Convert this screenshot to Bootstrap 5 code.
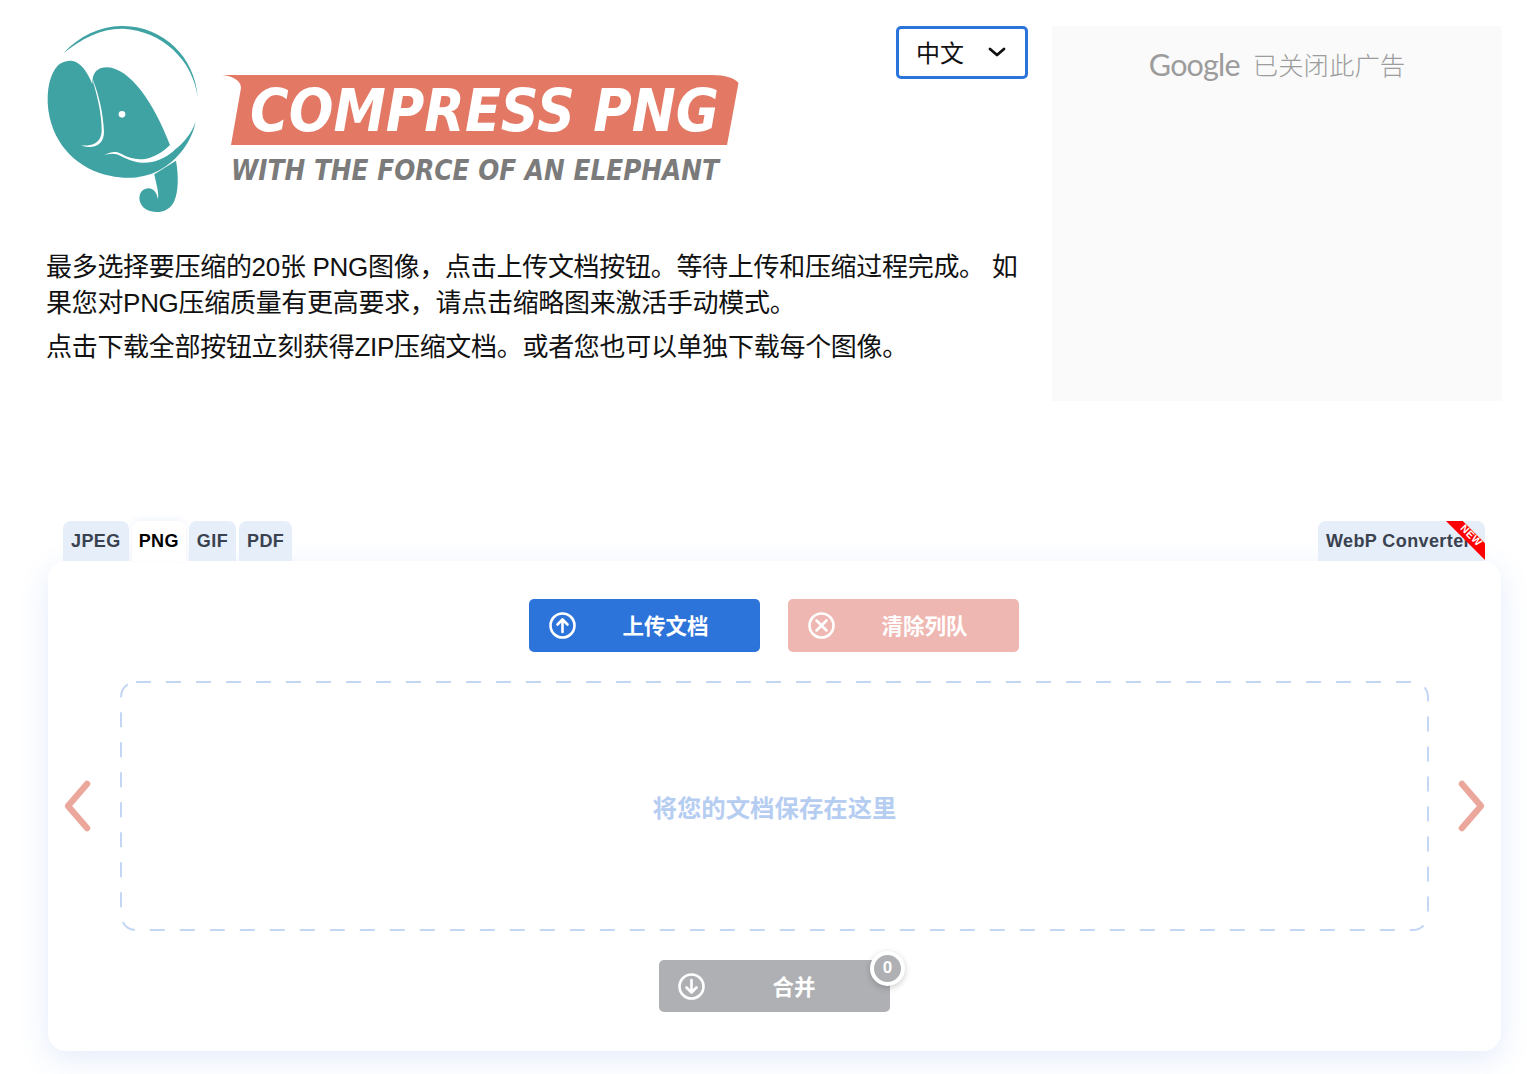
<!DOCTYPE html>
<html lang="zh">
<head>
    <meta charset="UTF-8">
    <meta name="viewport" content="width=device-width, initial-scale=1.0">
    <title>Compress PNG</title>
    <link href="https://cdn.jsdelivr.net/npm/bootstrap@5.3.0/dist/css/bootstrap.min.css" rel="stylesheet">
    <style>
        body {
            font-family: "Liberation Sans", "Noto Sans CJK SC", sans-serif;
            color: #111;
            background: #fff;
        }
        .page-wrap { padding: 26px 25px 23px 46px; }
        .top-left { width: 982px; }
        .logo-svg { display: block; width: 800px; height: 190px; margin-left: -6px; }
        .logo-title { font-family: "DejaVu Sans", sans-serif; font-weight: 700; font-style: italic; }
        .lang-select {
            width: 132px; height: 53px; border: 3px solid #2b74db; border-radius: 5px;
            font-size: 24px; color: #111; padding: 2px 0 0 17px; box-shadow: none;
            background-position: right 18px center; background-size: 20px 14px;
            background-image: url("data:image/svg+xml,%3csvg xmlns='http://www.w3.org/2000/svg' viewBox='0 0 20 14'%3e%3cpath fill='none' stroke='%23111' stroke-width='2.8' stroke-linecap='round' stroke-linejoin='round' d='M3 3l7 6 7-6'/%3e%3c/svg%3e");
        }
        .intro { font-size: 26px; line-height: 36px; letter-spacing: -.3px; margin-top: 33px; }
        .intro p { margin-bottom: 8px; }
        .ad-box { width: 450px; height: 375px; background: #fafafa; margin-left: 24px; padding-top: 18px; color: #9c9c9c; }
        .ad-google { font-family: Lato, "Open Sans", sans-serif; font-size: 30.5px; letter-spacing: -.8px; margin-right: 13px; line-height: 40px; }
        .ad-note { font-family: "Noto Sans CJK SC", sans-serif; font-size: 25.4px; font-weight: 300; line-height: 40px; }
        .tool-wrap { margin-top: 120px; padding-left: 2px; width: 1455px; }
        .tab-row { padding: 0 16px 0 15px; height: 40px; position: relative; z-index: 2; }
        .tab-gap { gap: 3px; }
        .tab-item {
            display: block; height: 40px; line-height: 41px; padding: 0 8px; background: #e6eefa;
            border-radius: 8px 8px 0 0; font-size: 18px; font-weight: 700; letter-spacing: .4px; color: #3a4250;
            text-decoration: none;
        }
        .tab-item.is-on { background: #fff; color: #000; padding: 0 7px; box-shadow: 0 -2px 6px rgba(70, 110, 200, .08); }
        .tab-new { position: relative; width: 167px; white-space: nowrap; }
        .new-flag {
            position: absolute; top: 0; right: 0; width: 39px; height: 39px; background: #f00;
            clip-path: polygon(0 0, 43% 0, 100% 57%, 100% 100%);
        }
        .new-text {
            position: absolute; top: 8px; right: 0; width: 27px; text-align: center; font-size: 10.5px; line-height: 12px;
            color: #fff; letter-spacing: .3px; transform: rotate(45deg);
        }
        .tool-panel {
            height: 490px; background: #fff; border: 0; border-radius: 18px; padding-top: 38px;
            box-shadow: 0 8px 30px rgba(60, 110, 220, .14); position: relative; z-index: 1;
        }
        .btn-gap { gap: 28px; padding-right: 1px; }
        .act-btn {
            width: 231px; height: 53px; border: 0; border-radius: 5px; color: #fff; padding: 0 5px 0 20px;
            font-size: 21.5px; font-weight: 700; font-family: "Noto Sans CJK SC", sans-serif;
        }
        .act-btn svg { width: 27px; height: 27px; flex: none; }
        .act-btn span { flex-grow: 1; text-align: center; }
        .act-blue { background: #2d74da; }
        .act-red { background: #efb7b1; }
        .act-gray { background: #aeb0b4; height: 52px; position: relative; padding-right: 7px; padding-left: 19px; }
        .count-dot {
            position: absolute; top: -9px; right: -15px; width: 35px; height: 35px; border-radius: 50%;
            background: #aeb0b4; border: 4px solid #fff; box-shadow: 0 2px 6px rgba(0, 0, 0, .2);
            font: 700 17px/25px "Liberation Sans", sans-serif; text-align: center;
        }
        .drop-row { margin-top: 29px; }
        .side-arrow { width: 72px; flex: none; }
        .side-left { padding-left: 15px; }
        .side-right { padding-right: 15px; }
        .side-arrow svg { display: block; width: 30px; height: 56px; }
        .drop-zone {
            width: 1309px; height: 250px; padding-top: 2px; color: #b6cdf2; font-size: 24.4px; font-weight: 700;
            font-family: "Noto Sans CJK SC", sans-serif;
            background-image: url("data:image/svg+xml,%3csvg xmlns='http://www.w3.org/2000/svg' width='1309' height='250'%3e%3crect x='1' y='1' width='1307' height='248' rx='15' fill='none' stroke='%23c3d7f5' stroke-width='2' stroke-dasharray='15 15'/%3e%3c/svg%3e");
        }
        .merge-row { margin-top: 29px; }
    </style>
</head>
<body>
    <div class="page-wrap">
        <div class="d-flex">
            <div class="top-left">
                <div class="d-flex justify-content-between align-items-start">
                    <svg class="logo-svg" viewBox="40 26 800 190" aria-label="Compress PNG">
                        <g transform="translate(30 10) scale(.3333)">
                            <g fill="#3fa2a3">
                                <!-- ring -->
                                <path d="M100 130C150 75 215 47 280 48C400 50 495 140 503 262C490 150 395 62 280 56C215 54 155 85 100 130Z"/>
                                <!-- head, ear and lower crescent in one shape -->
                                <path d="M122 152C150 152 172 185 187 222C186 190 200 172 232 172C300 176 370 275 420 405L430 423C460 400 485 370 497 335C485 395 445 450 385 482C340 505 290 508 240 497C150 480 70 410 55 300C48 240 60 190 85 165C97 155 110 152 122 152Z"/>
                                <!-- trunk -->
                                <path d="M373 493L438 452C446 495 446 545 432 575C418 605 378 615 348 598C326 585 322 555 338 541C356 528 378 533 384 568C388 550 378 520 373 493Z"/>
                            </g>
                            <g fill="#fff">
                                <!-- line between ear and head -->
                                <path d="M184 198C205 245 220 310 222 365C222 395 205 412 175 411C168 411 160 409 153 406C175 409 212 405 215 365C216 310 200 250 184 198Z"/>
                                <!-- mouth line -->
                                <path d="M222 436C240 425 258 422 275 432C300 447 330 452 360 443C385 435 405 420 420 405L432 422C405 445 370 460 335 458C300 456 280 440 260 433C245 429 232 433 222 436Z"/>
                                <circle cx="276" cy="313" r="10"/>
                            </g>
                        </g>
                        <path fill="#e37965" d="M222 75H712C725 75 735 78 738.5 83L727 145H231L241 88C241 80 232 76 222 75Z"/>
                        <text class="logo-title" x="250" y="131" font-size="58" fill="#fff" textLength="469" lengthAdjust="spacingAndGlyphs">COMPRESS PNG</text>
                        <text class="logo-title" x="231" y="180" font-size="28" fill="#7b7b7b" textLength="488" lengthAdjust="spacingAndGlyphs">WITH THE FORCE OF AN ELEPHANT</text>
                    </svg>
                    <select class="form-select lang-select" aria-label="语言">
                        <option>中文</option>
                        <option>English</option>
                    </select>
                </div>
                <div class="intro">
                    <p>最多选择要压缩的20张 PNG图像，点击上传文档按钮。等待上传和压缩过程完成。 如果您对PNG压缩质量有更高要求，请点击缩略图来激活手动模式。</p>
                    <p>点击下载全部按钮立刻获得ZIP压缩文档。或者您也可以单独下载每个图像。</p>
                </div>
            </div>
            <div class="ad-box d-flex justify-content-center align-items-start">
                <span class="ad-google">Google</span>
                <span class="ad-note">已关闭此广告</span>
            </div>
        </div>

        <div class="tool-wrap">
            <div class="tab-row d-flex justify-content-between">
                <div class="d-flex tab-gap">
                    <a class="tab-item" href="#">JPEG</a>
                    <a class="tab-item is-on" href="#">PNG</a>
                    <a class="tab-item" href="#">GIF</a>
                    <a class="tab-item" href="#">PDF</a>
                </div>
                <a class="tab-item tab-new" href="#">WebP Converter
                    <span class="new-flag"></span>
                    <span class="new-text">NEW</span>
                </a>
            </div>
            <div class="card tool-panel">
                <div class="d-flex justify-content-center btn-gap">
                    <button class="act-btn act-blue d-flex align-items-center" type="button">
                        <svg viewBox="0 0 27 27" fill="none" stroke="#fff" stroke-width="2.6" stroke-linecap="round" stroke-linejoin="round"><circle cx="13.5" cy="13.5" r="12"/><path d="M13.5 20V8M8.5 12.5l5-5 5 5"/></svg>
                        <span>上传文档</span>
                    </button>
                    <button class="act-btn act-red d-flex align-items-center" type="button">
                        <svg viewBox="0 0 27 27" fill="none" stroke="#fff" stroke-width="2.6" stroke-linecap="round"><circle cx="13.5" cy="13.5" r="12"/><path d="M8.5 8.5l10 10M18.5 8.5l-10 10"/></svg>
                        <span>清除列队</span>
                    </button>
                </div>
                <div class="drop-row d-flex align-items-center">
                    <div class="side-arrow side-left d-flex justify-content-start">
                        <svg viewBox="0 0 30 56" fill="none" stroke="#eba79c" stroke-width="6.5" stroke-linecap="round" stroke-linejoin="round"><path d="M24 6L5 28l19 22"/></svg>
                    </div>
                    <div class="drop-zone d-flex align-items-center justify-content-center">将您的文档保存在这里</div>
                    <div class="side-arrow side-right d-flex justify-content-end">
                        <svg viewBox="0 0 30 56" fill="none" stroke="#eba79c" stroke-width="6.5" stroke-linecap="round" stroke-linejoin="round"><path d="M6 6l19 22L6 50"/></svg>
                    </div>
                </div>
                <div class="merge-row d-flex justify-content-center">
                    <button class="act-btn act-gray d-flex align-items-center" type="button">
                        <svg viewBox="0 0 27 27" fill="none" stroke="#fff" stroke-width="2.6" stroke-linecap="round" stroke-linejoin="round"><circle cx="13.5" cy="13.5" r="12"/><path d="M13.5 7v12M8.5 14.5l5 5 5-5"/></svg>
                        <span>合并</span>
                        <b class="count-dot">0</b>
                    </button>
                </div>
            </div>
        </div>
    </div>
    <script src="https://cdn.jsdelivr.net/npm/bootstrap@5.3.0/dist/js/bootstrap.bundle.min.js"></script>
</body>
</html>
